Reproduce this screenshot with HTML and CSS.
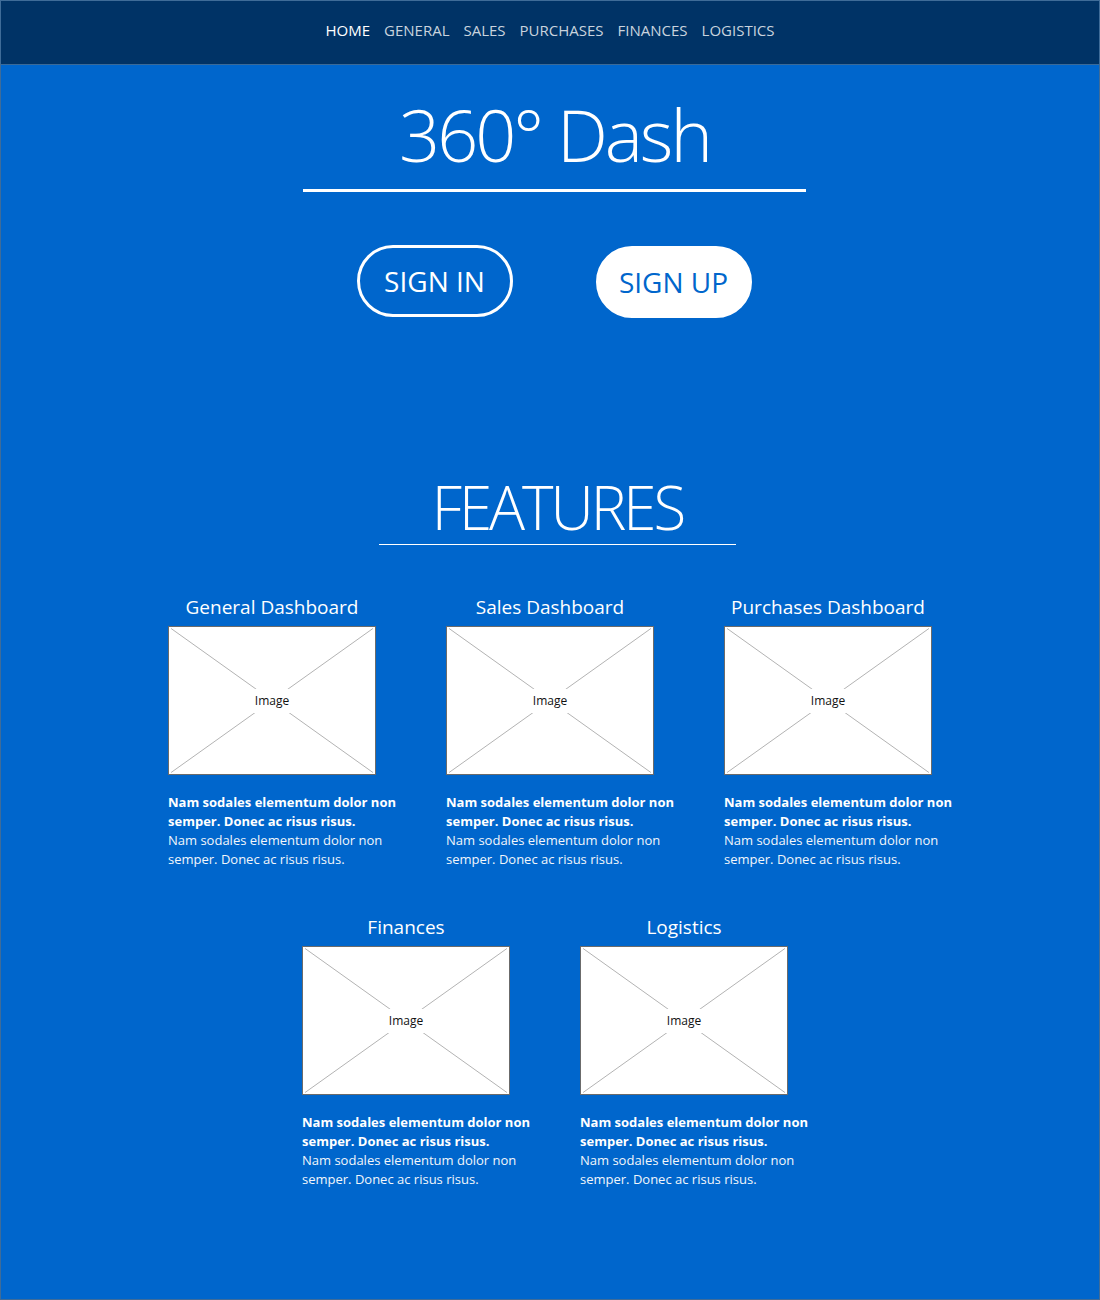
FILE: index.html
```html
<!DOCTYPE html>
<html lang="en">
<head>
<meta charset="utf-8">
<title>360° Dash</title>
<link rel="stylesheet" href="styles.css">
</head>
<body>
<nav class="topnav">
  <a class="nav-link active" href="#">HOME</a>
  <a class="nav-link" href="#">GENERAL</a>
  <a class="nav-link" href="#">SALES</a>
  <a class="nav-link" href="#">PURCHASES</a>
  <a class="nav-link" href="#">FINANCES</a>
  <a class="nav-link" href="#">LOGISTICS</a>
</nav>
<main class="page">
  <section class="hero">
    <h1 class="hero-title">360° Dash</h1>
    <div class="hero-rule"></div>
    <div class="hero-actions">
      <a class="btn btn-outline" href="#">SIGN IN</a>
      <a class="btn btn-solid" href="#">SIGN UP</a>
    </div>
  </section>
  <section class="features">
    <h2 class="features-title">FEATURES</h2>
    <div class="features-rule"></div>
    <div class="card-row">
      <div class="card">
        <h3 class="card-title">General Dashboard</h3>
        <div class="placeholder">
          <svg class="ph-lines" viewBox="0 0 100 100" preserveAspectRatio="none"><line x1="1" y1="1" x2="99" y2="99"/><line x1="99" y1="1" x2="1" y2="99"/></svg>
          <span class="ph-label">Image</span>
        </div>
        <p class="card-text"><b>Nam sodales elementum dolor non semper. Donec ac risus risus.</b><br>Nam sodales elementum dolor non semper. Donec ac risus risus.</p>
      </div>
      <div class="card">
        <h3 class="card-title">Sales Dashboard</h3>
        <div class="placeholder">
          <svg class="ph-lines" viewBox="0 0 100 100" preserveAspectRatio="none"><line x1="1" y1="1" x2="99" y2="99"/><line x1="99" y1="1" x2="1" y2="99"/></svg>
          <span class="ph-label">Image</span>
        </div>
        <p class="card-text"><b>Nam sodales elementum dolor non semper. Donec ac risus risus.</b><br>Nam sodales elementum dolor non semper. Donec ac risus risus.</p>
      </div>
      <div class="card">
        <h3 class="card-title">Purchases Dashboard</h3>
        <div class="placeholder">
          <svg class="ph-lines" viewBox="0 0 100 100" preserveAspectRatio="none"><line x1="1" y1="1" x2="99" y2="99"/><line x1="99" y1="1" x2="1" y2="99"/></svg>
          <span class="ph-label">Image</span>
        </div>
        <p class="card-text"><b>Nam sodales elementum dolor non semper. Donec ac risus risus.</b><br>Nam sodales elementum dolor non semper. Donec ac risus risus.</p>
      </div>
    </div>
    <div class="card-row card-row-2">
      <div class="card">
        <h3 class="card-title">Finances</h3>
        <div class="placeholder">
          <svg class="ph-lines" viewBox="0 0 100 100" preserveAspectRatio="none"><line x1="1" y1="1" x2="99" y2="99"/><line x1="99" y1="1" x2="1" y2="99"/></svg>
          <span class="ph-label">Image</span>
        </div>
        <p class="card-text"><b>Nam sodales elementum dolor non semper. Donec ac risus risus.</b><br>Nam sodales elementum dolor non semper. Donec ac risus risus.</p>
      </div>
      <div class="card">
        <h3 class="card-title">Logistics</h3>
        <div class="placeholder">
          <svg class="ph-lines" viewBox="0 0 100 100" preserveAspectRatio="none"><line x1="1" y1="1" x2="99" y2="99"/><line x1="99" y1="1" x2="1" y2="99"/></svg>
          <span class="ph-label">Image</span>
        </div>
        <p class="card-text"><b>Nam sodales elementum dolor non semper. Donec ac risus risus.</b><br>Nam sodales elementum dolor non semper. Donec ac risus risus.</p>
      </div>
    </div>
  </section>
</main>
</body>
</html>
```
FILE: styles.css
```css
* { box-sizing: border-box; }
html, body { margin: 0; padding: 0; }
body {
  min-height: 1300px;
  background: #0066cc;
  border: 1px solid #3f6c98;
  font-family: "Open Sans", "Noto Sans", sans-serif;
  color: #ffffff;
}
.topnav {
  height: 64px;
  background: #003366;
  border-bottom: 1px solid #3a6a98;
  display: flex;
  justify-content: center;
  align-items: center;
  gap: 14px;
  padding-bottom: 5px;
}
.nav-link {
  color: #c9d3de;
  text-decoration: none;
  font-size: 15px;
}
.nav-link.active { color: #ffffff; }

.hero {
  display: flex;
  flex-direction: column;
  align-items: center;
  padding-top: 25px;
  padding-left: 8px;
}
.hero-title {
  margin: 0;
  font-size: 72px;
  line-height: 88px;
  font-weight: 300;
  letter-spacing: -3px;
  padding-left: 1px;
}
.hero-rule {
  width: 503px;
  height: 3px;
  background: #ffffff;
  margin-top: 11px;
}
.hero-actions {
  display: flex;
  gap: 83px;
  margin-top: 53px;
}
.btn {
  width: 156px;
  height: 72px;
  border: 3px solid #ffffff;
  border-radius: 36px;
  display: flex;
  align-items: center;
  justify-content: center;
  font-size: 28px;
  text-decoration: none;
  color: #ffffff;
}
.btn-solid {
  background: #ffffff;
  color: #0066cc;
  margin-top: 1px;
}

.features {
  display: flex;
  flex-direction: column;
  align-items: center;
  margin-top: 153px;
  padding-left: 14px;
}
.features-title {
  margin: 0;
  font-size: 60px;
  line-height: 73px;
  font-weight: 300;
  letter-spacing: -3px;
  padding-left: 1px;
}
.features-rule {
  width: 357px;
  height: 1px;
  background: #ffffff;
}
.card-row {
  display: flex;
  justify-content: center;
  gap: 70px;
  margin-top: 49px;
  margin-left: -14px;
}
.card-row-2 {
  margin-top: 45px;
  padding-right: 10px;
}
.card { width: 208px; }
.card-title {
  margin: 0 0 6px;
  font-size: 19px;
  line-height: 26px;
  font-weight: 400;
  text-align: center;
}
.placeholder {
  position: relative;
  width: 208px;
  height: 149px;
  background: #ffffff;
  border: 1px solid #6b6b6b;
  display: flex;
  align-items: center;
  justify-content: center;
}
.ph-lines {
  position: absolute;
  inset: 0;
  width: 100%;
  height: 100%;
}
.ph-lines line {
  stroke: #b3b3b3;
  stroke-width: 1;
  vector-effect: non-scaling-stroke;
}
.ph-label {
  position: relative;
  background: #ffffff;
  color: #111111;
  font-size: 12px;
  line-height: 12px;
  padding: 6px 1px;
}
.card-text {
  width: 245px;
  margin: 18px 0 0;
  font-size: 13px;
  line-height: 19px;
  color: #f2f6fb;
}
.card-text b {
  font-weight: 700;
  color: #ffffff;
}
```
